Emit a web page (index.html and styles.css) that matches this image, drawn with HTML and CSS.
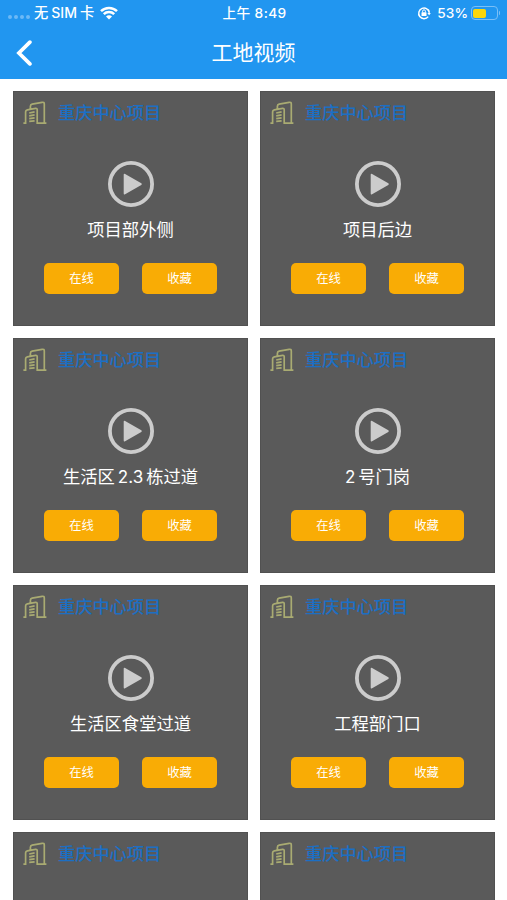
FILE: index.html
```html
<!DOCTYPE html>
<html lang="zh-CN">
<head>
  <meta charset="UTF-8">
  <title>工地视频</title>
  <link rel="stylesheet" href="styles.css">
</head>
<body>

  <!-- 图标 -->
  <svg class="sprite">
    <symbol id="building" viewBox="0 0 24 24">
      <path d="M.4 22.2h2.2V10.8q0-1.7 1.7-2l8.3-1.5q1.6-.2 1.6 1.4v13.5h9.2M7.4 7.9V5.2q0-1.7 1.7-2L19.1 1.3q2.2-.4 2.2 1.6v19.3"/>
      <path d="M6.2 12l5.4-1.2M6.2 14.9l5.4-1M6.2 17.7l5.4-.8M6.2 20.4l5.4-.6"/>
    </symbol>
    <symbol id="play" viewBox="0 0 46 46">
      <circle cx="23" cy="23" r="21.1"/>
      <path d="M15.7 13.8v18.6q0 1.5 1.4.8l16.2-9.2q1.2-.9 0-1.7l-16.2-9.3q-1.4-.7-1.4.8z"/>
    </symbol>
  </svg>

  <header>
    <div class="status">
      <div class="status-left">
        <span class="signal"><i></i><i></i><i></i><i></i></span>
        <span class="carrier">无<b>SIM</b>卡</span>
        <svg class="wifi" viewBox="0 0 18 14">
          <path d="M1 5.2a11.4 11.4 0 0 1 16 0M3.8 8.1a7.4 7.4 0 0 1 10.4 0"/>
          <path class="dot" d="M9 13.6l-3-3.1a4.2 4.2 0 0 1 6 0z"/>
        </svg>
      </div>
      <div class="time">上午 8:49</div>
      <div class="status-right">
        <svg class="lock" viewBox="0 0 14 14">
          <path d="M11.2 10.6A5.3 5.3 0 1 1 12.3 6.8M11.2 3.4a5.3 5.3 0 0 1 1 4.6"/>
          <path class="fill" d="M10.4 7h3.4l-1.7 2.2z"/>
          <rect class="fill" x="4.5" y="6.2" width="5" height="3.8" rx=".6"/>
          <path class="shackle" d="M5.6 6.4V5.2a1.4 1.4 0 0 1 2.8 0v1.2"/>
        </svg>
        <span class="percent">53%</span>
        <span class="battery"><i></i></span>
      </div>
    </div>
    <nav>
      <a class="back" href="#"><svg viewBox="0 0 16 26"><path d="M13.9 2.1 2.9 13l11 10.9"/></svg></a>
      <h1>工地视频</h1>
    </nav>
  </header>

  <main>
    <div class="card">
      <div class="project"><svg><use href="#building"/></svg><span>重庆中心项目</span></div>
      <svg class="play"><use href="#play"/></svg>
      <p class="name">项目部外侧</p>
      <div class="actions"><button>在线</button><button>收藏</button></div>
    </div>
    <div class="card">
      <div class="project"><svg><use href="#building"/></svg><span>重庆中心项目</span></div>
      <svg class="play"><use href="#play"/></svg>
      <p class="name">项目后边</p>
      <div class="actions"><button>在线</button><button>收藏</button></div>
    </div>
    <div class="card">
      <div class="project"><svg><use href="#building"/></svg><span>重庆中心项目</span></div>
      <svg class="play"><use href="#play"/></svg>
      <p class="name">生活区<span class="num">2.3</span>栋过道</p>
      <div class="actions"><button>在线</button><button>收藏</button></div>
    </div>
    <div class="card">
      <div class="project"><svg><use href="#building"/></svg><span>重庆中心项目</span></div>
      <svg class="play"><use href="#play"/></svg>
      <p class="name"><span class="num first">2</span>号门岗</p>
      <div class="actions"><button>在线</button><button>收藏</button></div>
    </div>
    <div class="card">
      <div class="project"><svg><use href="#building"/></svg><span>重庆中心项目</span></div>
      <svg class="play"><use href="#play"/></svg>
      <p class="name">生活区食堂过道</p>
      <div class="actions"><button>在线</button><button>收藏</button></div>
    </div>
    <div class="card">
      <div class="project"><svg><use href="#building"/></svg><span>重庆中心项目</span></div>
      <svg class="play"><use href="#play"/></svg>
      <p class="name">工程部门口</p>
      <div class="actions"><button>在线</button><button>收藏</button></div>
    </div>
    <div class="card">
      <div class="project"><svg><use href="#building"/></svg><span>重庆中心项目</span></div>
    </div>
    <div class="card">
      <div class="project"><svg><use href="#building"/></svg><span>重庆中心项目</span></div>
    </div>
  </main>

</body>
</html>
```
FILE: styles.css
```css
* {
  box-sizing: border-box;
}

body {
  display: flex;
  flex-direction: column;
  margin: 0;
  height: 900px;
  overflow: hidden;
  background-color: #fff;
  font-family: Inter, "Noto Sans CJK SC", sans-serif;
}

.sprite {
  display: none;
}

header {
  flex: none;
  height: 79.4px;
  background-color: #2196f0;
  color: #fff;
}

/* 状态栏 */
.status {
  display: grid;
  grid-template-columns: 1fr auto 1fr;
  align-items: center;
  height: 26px;
  padding: 0 6px 0 8px;
  font-size: 13.7px;
  font-weight: 500;
  line-height: 26px;
}

.status-left, .status-right {
  display: flex;
  align-items: center;
}

.status-right {
  justify-content: flex-end;
}

.signal {
  display: flex;
  gap: 2px;
  margin: 8px 4px 0 0;
}

.signal i {
  width: 4px;
  height: 4px;
  border-radius: 50%;
  background-color: #6cb9f6;
}

.carrier {
  font-size: 14.3px;
}

.carrier b {
  margin: 0 3px;
  font-size: 14px;
  font-weight: 500;
}

.wifi {
  width: 18px;
  height: 14px;
  margin-left: 6px;
  fill: none;
  stroke: #fff;
  stroke-width: 2.5;
}

.wifi .dot {
  fill: #fff;
  stroke: none;
}

.time {
  letter-spacing: 0.4px;
}

.lock {
  width: 14px;
  height: 14px;
  margin-right: 6px;
  fill: none;
  stroke: #fff;
  stroke-width: 1.5;
}

.lock .fill {
  fill: #fff;
  stroke: none;
}

.lock .shackle {
  stroke-width: 1;
}

.battery {
  position: relative;
  width: 27px;
  height: 14px;
  margin: 0 3px 0 3px;
  padding: 1.5px 1px;
  border: 1px solid #7abff7;
  border-radius: 4px;
}

.battery i {
  display: block;
  width: 13px;
  height: 9px;
  border-radius: 2px;
  background-color: #fbd60a;
}

.battery::after {
  content: "";
  position: absolute;
  right: -3px;
  top: 4px;
  width: 1.5px;
  height: 4px;
  border-radius: 0 2px 2px 0;
  background-color: #7abff7;
}

/* 标题栏 */
nav {
  display: grid;
  grid-template-columns: 1fr auto 1fr;
  align-items: center;
  height: 53px;
  padding-left: 16px;
}

.back svg {
  display: block;
  width: 16px;
  height: 26px;
  fill: none;
  stroke: #fff;
  stroke-width: 3.7;
  stroke-linecap: round;
}

h1 {
  margin: 0 16px 0 0;
  font-size: 21px;
  font-weight: 400;
  line-height: 30px;
}

/* 视频列表 */
main {
  display: grid;
  flex: 1;
  min-height: 0;
  grid-template-columns: 235px 235px;
  grid-auto-rows: 235px;
  gap: 12px;
  padding: 11.6px 13px 0;
  overflow: hidden;
}

.card {
  display: flex;
  flex-direction: column;
  align-items: center;
  background-color: #5a5a5a;
  border: 1px solid #515151;
}

.project {
  display: flex;
  align-items: center;
  align-self: stretch;
  gap: 11px;
  height: 24px;
  margin: 9px 0 36px;
  padding-left: 9px;
  color: #1c6fc4;
  font-size: 17.2px;
  font-weight: 500;
  line-height: 24px;
}

.project svg {
  width: 24px;
  height: 24px;
  fill: none;
  stroke: #a9ab72;
  stroke-width: 1.7;
}

.play {
  width: 46px;
  height: 46px;
  fill: #ccc;
}

#play circle {
  fill: none;
  stroke: #ccc;
  stroke-width: 3.8;
}

.name {
  margin: 11px 0 0;
  color: #fff;
  font-size: 17.3px;
  line-height: 24px;
}

.num {
  margin: 0 3px;
  font-size: 17px;
}

.num.first {
  margin-left: 0;
}

.actions {
  display: flex;
  gap: 23px;
  margin-top: 21px;
}

button {
  width: 75px;
  height: 31px;
  padding: 0;
  border: none;
  border-radius: 5px;
  background-color: #f9ac05;
  color: #fff;
  font-family: inherit;
  font-size: 12.3px;
}
```
